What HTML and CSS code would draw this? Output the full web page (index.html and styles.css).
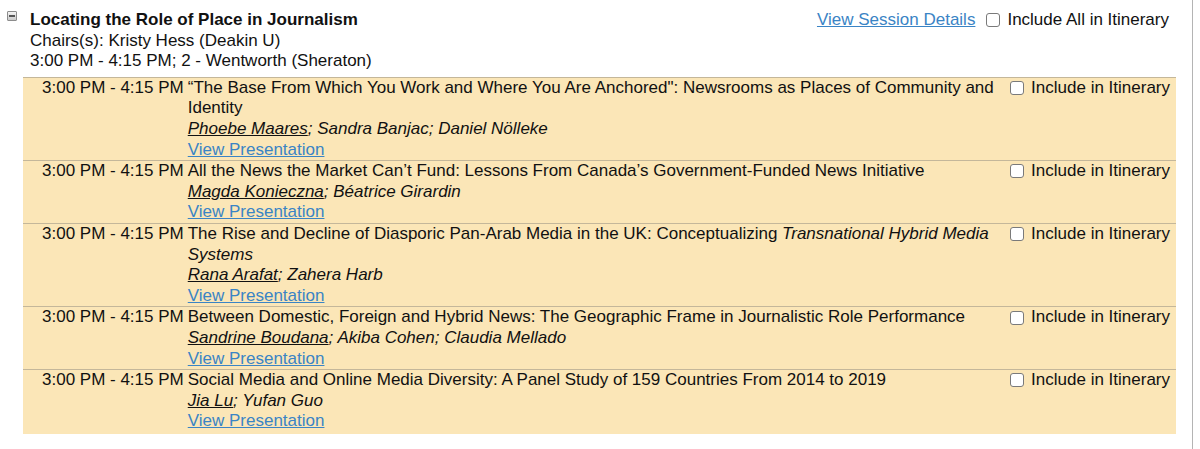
FILE: index.html
```html
<!DOCTYPE html>
<html lang="en">
<head>
<meta charset="utf-8">
<title>Locating the Role of Place in Journalism</title>
<link rel="stylesheet" href="styles.css">
</head>
<body>
<div class="page">
  <div class="session">
    <div class="session-head">
      <span class="toggle" aria-hidden="true"></span>
      <div class="info">
        <div class="s-title">Locating the Role of Place in Journalism</div>
        <div>Chairs(s): Kristy Hess (Deakin U)</div>
        <div>3:00 PM - 4:15 PM; 2 - Wentworth (Sheraton)</div>
      </div>
      <div class="actions">
        <a href="#" class="link">View Session Details</a>
        <label class="inc"><span class="cb"></span>Include All in Itinerary</label>
      </div>
    </div>
    <div class="papers">
      <div class="paper">
        <div class="time">3:00 PM - 4:15 PM</div>
        <div class="pbody">
          <div>“The Base From Which You Work and Where You Are Anchored": Newsrooms as Places of Community and Identity</div>
          <div class="authors"><u>Phoebe Maares</u>; Sandra Banjac; Daniel Nölleke</div>
          <a href="#" class="link">View Presentation</a>
        </div>
        <label class="inc"><span class="cb"></span>Include in Itinerary</label>
      </div>
      <div class="paper">
        <div class="time">3:00 PM - 4:15 PM</div>
        <div class="pbody">
          <div>All the News the Market Can’t Fund: Lessons From Canada’s Government-Funded News Initiative</div>
          <div class="authors"><u>Magda Konieczna</u>; Béatrice Girardin</div>
          <a href="#" class="link">View Presentation</a>
        </div>
        <label class="inc"><span class="cb"></span>Include in Itinerary</label>
      </div>
      <div class="paper">
        <div class="time">3:00 PM - 4:15 PM</div>
        <div class="pbody">
          <div>The Rise and Decline of Diasporic Pan-Arab Media in the UK: Conceptualizing <i>Transnational Hybrid Media Systems</i></div>
          <div class="authors"><u>Rana Arafat</u>; Zahera Harb</div>
          <a href="#" class="link">View Presentation</a>
        </div>
        <label class="inc"><span class="cb"></span>Include in Itinerary</label>
      </div>
      <div class="paper">
        <div class="time">3:00 PM - 4:15 PM</div>
        <div class="pbody">
          <div>Between Domestic, Foreign and Hybrid News: The Geographic Frame in Journalistic Role Performance</div>
          <div class="authors"><u>Sandrine Boudana</u>; Akiba Cohen; Claudia Mellado</div>
          <a href="#" class="link">View Presentation</a>
        </div>
        <label class="inc"><span class="cb"></span>Include in Itinerary</label>
      </div>
      <div class="paper">
        <div class="time">3:00 PM - 4:15 PM</div>
        <div class="pbody">
          <div>Social Media and Online Media Diversity: A Panel Study of 159 Countries From 2014 to 2019</div>
          <div class="authors"><u>Jia Lu</u>; Yufan Guo</div>
          <a href="#" class="link">View Presentation</a>
        </div>
        <label class="inc"><span class="cb"></span>Include in Itinerary</label>
      </div>
    </div>
  </div>
</div>
</body>
</html>
```
FILE: styles.css
```css
html, body {
  margin: 0;
  padding: 0;
  background: #ffffff;
}
body {
  font-family: "Liberation Sans", Arial, Helvetica, sans-serif;
  font-size: 17px;
  line-height: 20.6px;
  color: #111111;
}
.page {
  width: 1193px;
  min-height: 449px;
  border-right: 1px solid #b4b4b4;
  box-sizing: border-box;
  padding-top: 10px;
}
.session-head {
  display: flex;
  align-items: flex-start;
  padding-left: 7px;
  padding-right: 23px;
}
.toggle {
  width: 8px;
  height: 8px;
  margin-top: 1px;
  border: 1px solid #8c8c8c;
  border-radius: 1px;
  background: linear-gradient(#f4f4f4, #c9c9c9);
  position: relative;
  flex: none;
}
.toggle::after {
  content: "";
  position: absolute;
  left: 1px;
  right: 1px;
  top: 3px;
  height: 2px;
  background: #555555;
}
.info {
  margin-left: 13px;
  flex: 1;
}
.s-title {
  font-weight: bold;
}
.actions {
  display: flex;
  align-items: center;
  gap: 11px;
}
.link {
  color: #3a84c5;
  text-decoration: underline;
}
.inc {
  display: flex;
  align-items: center;
  white-space: nowrap;
}
.cb {
  width: 14px;
  height: 14px;
  box-sizing: border-box;
  border: 1px solid #7a7a7a;
  border-radius: 3px;
  background: #ffffff;
  margin-right: 7px;
  flex: none;
}
.papers {
  margin: 5px 0 0 23px;
  width: 1153px;
  background: #fbe6b7;
  padding-bottom: 2px;
}
.paper {
  display: grid;
  grid-template-columns: auto 1fr auto;
  border-top: 1px solid #c4b79a;
}
.time {
  padding-left: 19px;
  padding-right: 4px;
  white-space: nowrap;
}
.pbody {
  padding-right: 10px;
}
.authors {
  font-style: italic;
}
.paper .inc {
  align-self: start;
  padding-right: 6px;
}
```
